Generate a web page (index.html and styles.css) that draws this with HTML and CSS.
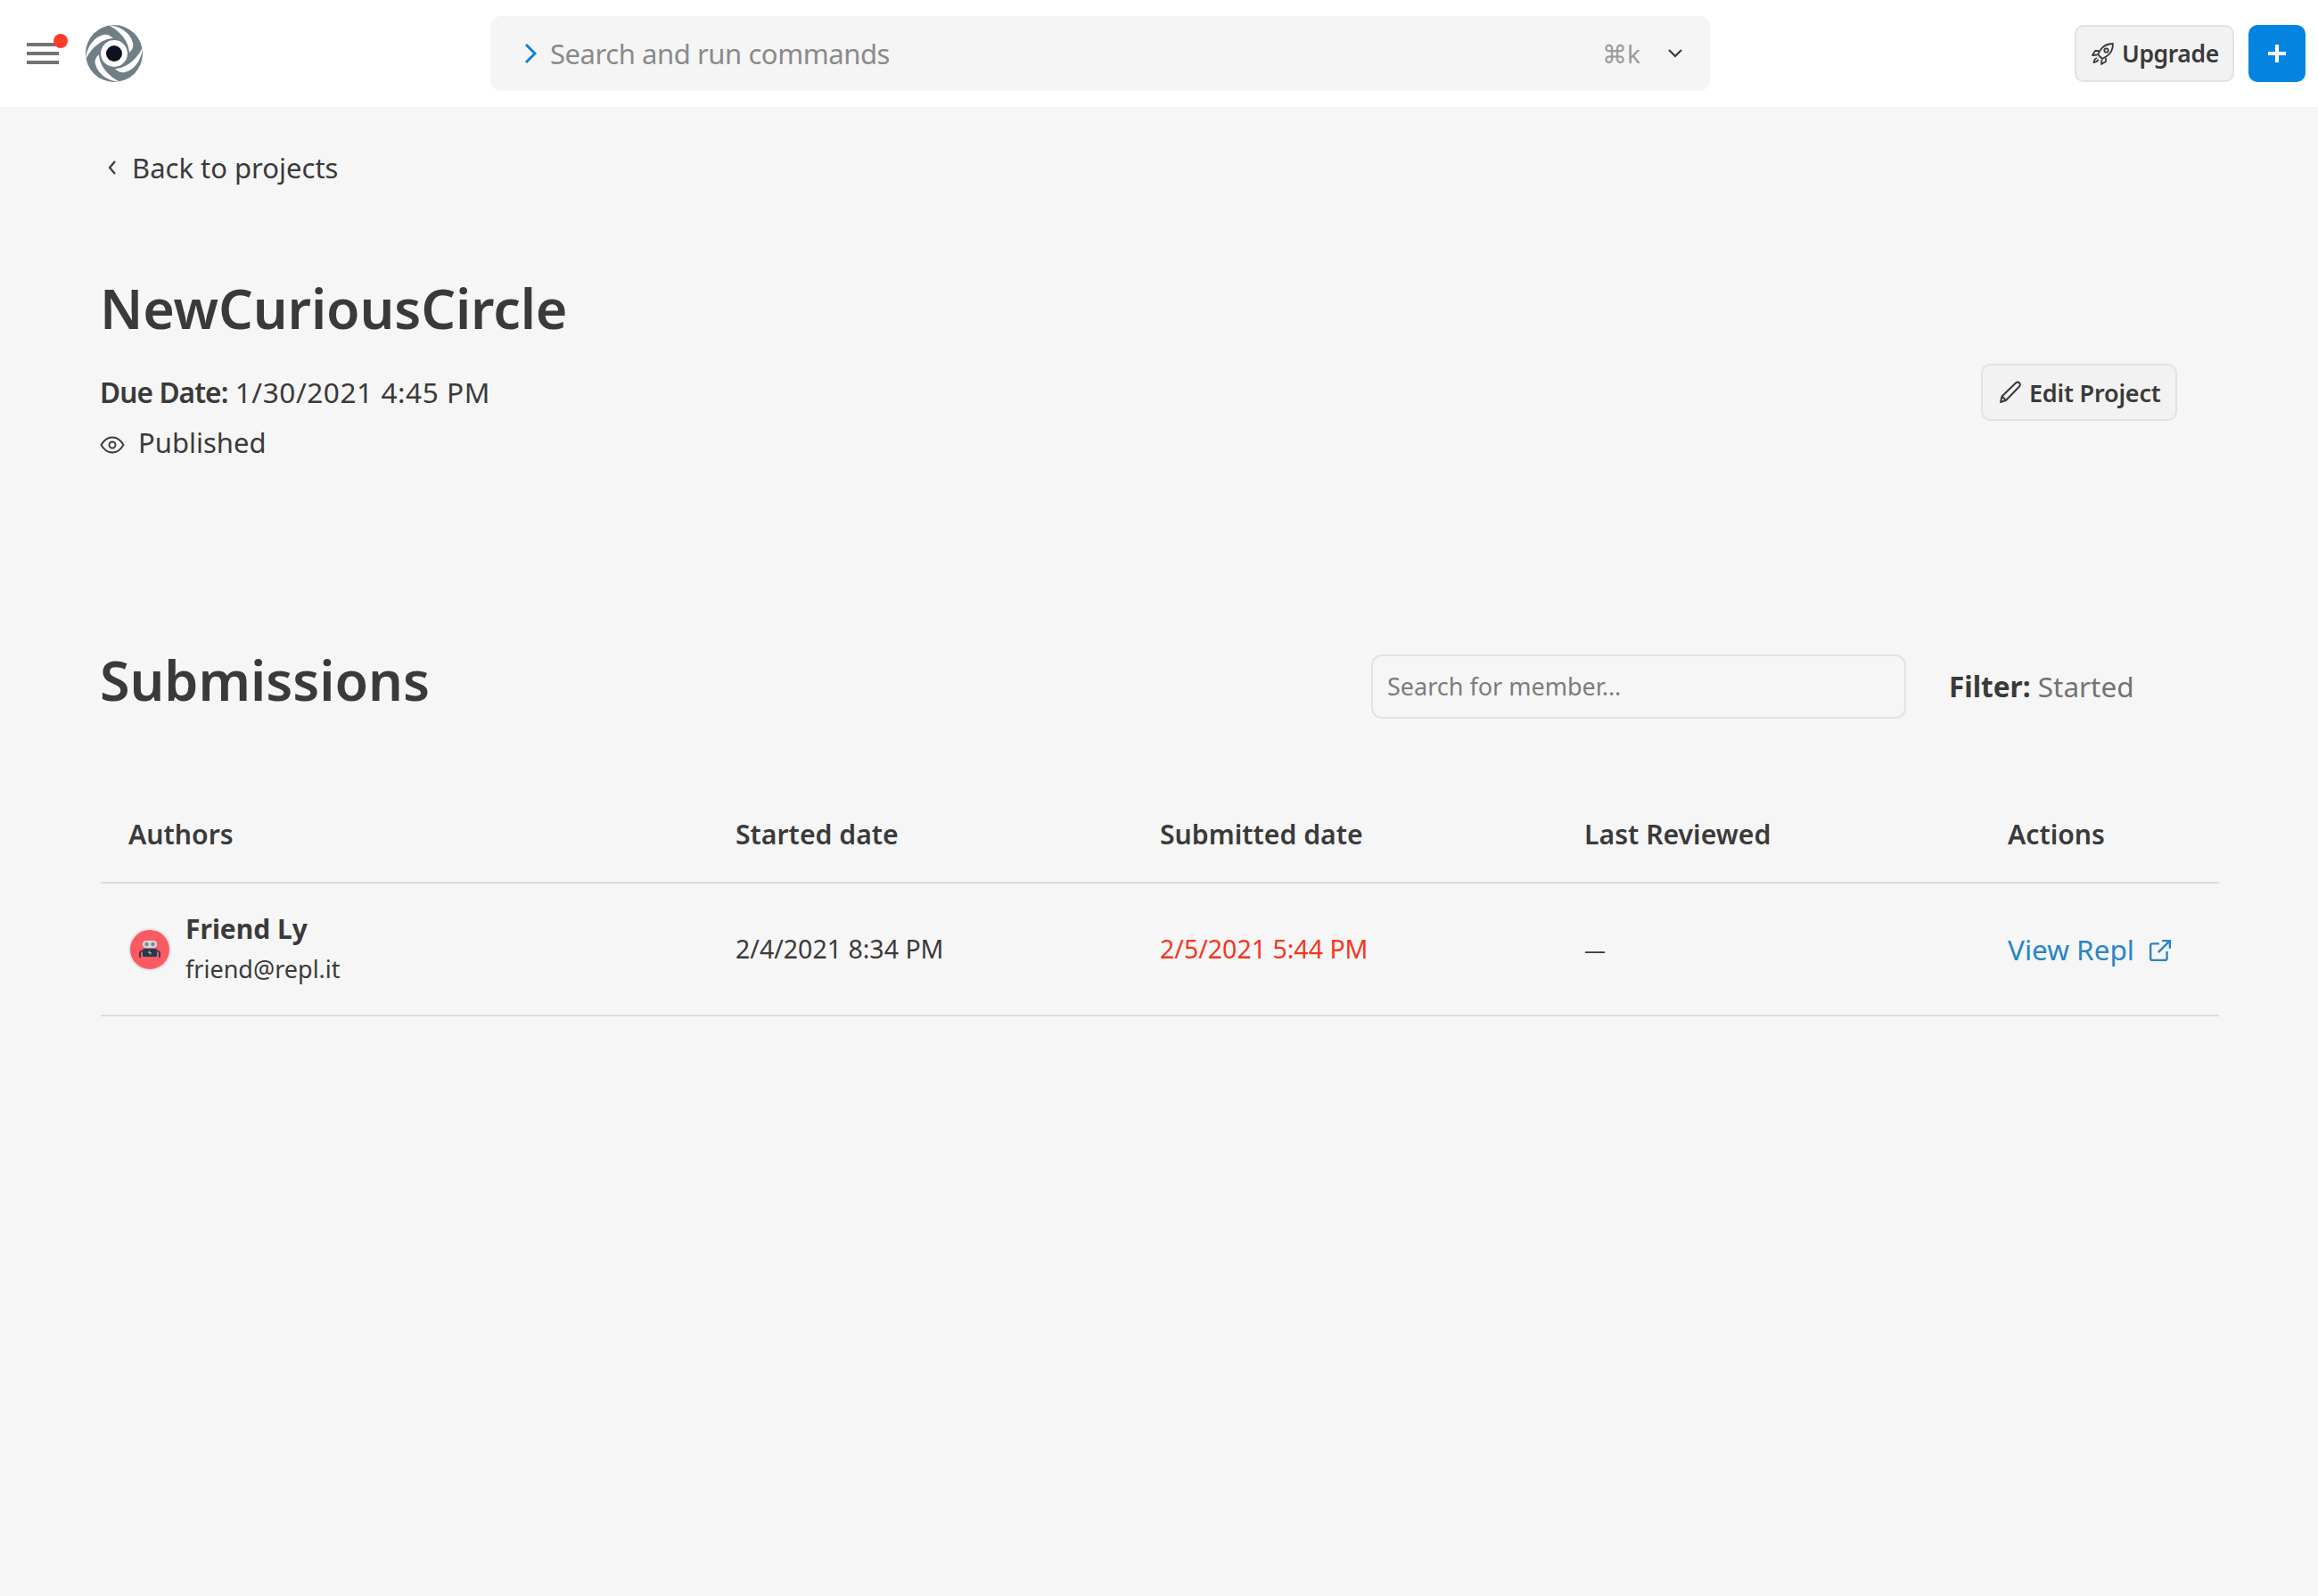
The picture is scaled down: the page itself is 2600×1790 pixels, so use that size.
FILE: index.html
```html
<!DOCTYPE html>
<html lang="en">
<head>
<meta charset="utf-8">
<title>NewCuriousCircle</title>
<link rel="stylesheet" href="styles.css">
</head>
<body>
<header class="topbar">
  <div class="brand">
    <button class="menu" aria-label="Menu">
      <svg class="menu-icon" viewBox="0 0 36 24"><path d="M0 2h36M0 12h36M0 22h36" stroke="#737373" stroke-width="4"/></svg>
      <span class="menu-dot"></span>
    </button>
    <svg class="logo" viewBox="0 0 64 64">
      <circle cx="32" cy="32" r="32" fill="#6f7f85"/>
      <circle cx="32" cy="32" r="15" fill="#fff"/>
      <g fill="#fff">
        <path d="M25 0C38 1 50 8 53 20C54 24 53 27 49 31C49 22 42 8 25 0z"/>
        <path d="M25 0C38 1 50 8 53 20C54 24 53 27 49 31C49 22 42 8 25 0z" transform="rotate(90 32 32)"/>
        <path d="M25 0C38 1 50 8 53 20C54 24 53 27 49 31C49 22 42 8 25 0z" transform="rotate(180 32 32)"/>
        <path d="M25 0C38 1 50 8 53 20C54 24 53 27 49 31C49 22 42 8 25 0z" transform="rotate(270 32 32)"/>
      </g>
      <circle cx="32" cy="32" r="9" fill="#0e1220"/>
    </svg>
  </div>
  <div class="command">
    <svg class="cmd-chevron" viewBox="0 0 14 24"><path d="M2 2l10 10L2 22" fill="none" stroke="#0b83d9" stroke-width="3"/></svg>
    <span class="cmd-text">Search and run commands</span>
    <span class="cmd-key">⌘k</span>
    <svg class="cmd-down" viewBox="0 0 18 12"><path d="M2 2l7 7 7-7" fill="none" stroke="#333" stroke-width="2"/></svg>
  </div>
  <div class="top-actions">
    <button class="btn btn-upgrade">
      <svg class="icon-rocket" viewBox="0 0 26 26" fill="none" stroke="#3a3a3a" stroke-width="1.8" stroke-linejoin="round"><path d="M24 2c-6 0-11 2.500-14 7l-3 5 5 5 5-3c4.500-3 7-8 7-14z"/><circle cx="16.500" cy="9.500" r="2.200"/><path d="M8 10H4l-3 5 5-.5M16 18v4l-5 3 .5-5M6 18c-2 .5-3 2-3.500 5 3-.5 4.500-1.500 5-3.500"/></svg>
      Upgrade
    </button>
    <button class="btn-plus" aria-label="New">
      <svg viewBox="0 0 24 24"><path d="M12 2v20M2 12h20" stroke="#fff" stroke-width="4"/></svg>
    </button>
  </div>
</header>

<main class="page">
  <a class="back" href="#">
    <svg class="back-icon" viewBox="0 0 12 20"><path d="M9 3L3 10l6 7" fill="none" stroke="#3a3a3a" stroke-width="2.200"/></svg>
    Back to projects
  </a>

  <h1 class="title">NewCuriousCircle</h1>
  <div class="project-meta">
    <div class="meta-text">
      <p class="due"><b>Due Date:</b> <span class="due-value">1/30/2021 4:45 PM</span></p>
      <p class="status">
        <svg class="icon-eye" viewBox="0 0 28 22" fill="none" stroke="#3a3a3a" stroke-width="1.900"><path d="M1.500 11C5 5 9 2.500 14 2.500S23 5 26.500 11C23 17 19 19.500 14 19.500S5 17 1.500 11z"/><circle cx="14" cy="11" r="3.500"/></svg>
        Published
      </p>
    </div>
    <button class="btn btn-edit">
      <svg class="icon-pencil" viewBox="0 0 26 26" fill="none" stroke="#3a3a3a" stroke-width="2" stroke-linejoin="round"><path d="M2 24l1.500-6.500L19 2.500c1.500-1.200 3-1 4 0s1.200 2.500 0 4L8 22z"/><path d="M3.500 17.500L8 22"/></svg>
      Edit Project
    </button>
  </div>

  <section class="submissions">
    <div class="sub-head">
      <h2 class="sub-title">Submissions</h2>
      <input class="member-search" type="text" placeholder="Search for member...">
      <div class="filter"><b>Filter:</b> <span>Started</span></div>
    </div>

    <div class="table">
      <div class="row row-head">
        <div>Authors</div>
        <div>Started date</div>
        <div>Submitted date</div>
        <div>Last Reviewed</div>
        <div>Actions</div>
      </div>
      <div class="row row-body">
        <div class="author">
          <svg class="avatar" viewBox="0 0 48 48">
            <circle cx="24" cy="24" r="23" fill="#fb5a64" stroke="#e4e4e4" stroke-width="2"/>
            <rect x="16" y="14" width="16" height="8" rx="4" fill="#d5dadb"/>
            <circle cx="20.500" cy="18" r="2.300" fill="#7c8b90"/><circle cx="27.500" cy="18" r="2.300" fill="#7c8b90"/>
            <rect x="16" y="23" width="16" height="9" rx="1.500" fill="#1f3b55"/>
            <path d="M24 25l-1.500 2.500h3L24 30" fill="none" stroke="#e9b731" stroke-width="1"/>
            <path d="M16 25l-3 2v6M32 25l3 2v6" fill="none" stroke="#3c3f46" stroke-width="2"/>
          </svg>
          <div class="author-text">
            <div class="author-name">Friend Ly</div>
            <div class="author-mail">friend@repl.it</div>
          </div>
        </div>
        <div>2/4/2021 8:34 PM</div>
        <div class="late">2/5/2021 5:44 PM</div>
        <div class="dash">—</div>
        <div>
          <a class="view" href="#">View Repl
            <svg class="icon-ext" viewBox="0 0 24 24" fill="none" stroke="#2b84c6" stroke-width="2.200"><path d="M11 5H4a2 2 0 0 0-2 2v13a2 2 0 0 0 2 2h13a2 2 0 0 0 2-2v-7"/><path d="M10 14L22 2M14 2h8v8"/></svg>
          </a>
        </div>
      </div>
    </div>
  </section>
</main>
</body>
</html>
```

FILE: styles.css
```css
* { box-sizing: border-box; }
html, body { margin: 0; padding: 0; }
body {
  min-height: 1790px;
  background: #f6f6f6;
  color: #3a3a3a;
  font-family: "Noto Sans", "Liberation Sans", sans-serif;
  font-size: 32px;
}
button { font-family: inherit; cursor: pointer; }
p { margin: 0; }

.topbar {
  height: 120px;
  background: #fff;
  position: relative;
  display: flex;
  align-items: center;
  padding: 0 14px 0 30px;
}
.brand { display: flex; align-items: center; width: 520px; gap: 30px; }
.menu {
  position: relative;
  width: 36px;
  height: 24px;
  padding: 0;
  border: 0;
  background: none;
}
.menu-icon { display: block; width: 36px; height: 24px; }
.menu-dot {
  position: absolute;
  right: -10px;
  top: -10px;
  width: 16px;
  height: 16px;
  border-radius: 50%;
  background: #ff3c28;
}
.logo { width: 64px; height: 64px; display: block; }

.command {
  width: 1368px;
  height: 84px;
  background: #f5f5f5;
  border-radius: 12px;
  display: flex;
  align-items: center;
  padding: 0 30px 0 38px;
}
.cmd-chevron { width: 14px; height: 24px; margin-right: 15px; }
.cmd-text { flex: 1; color: #8a8a8a; font-size: 31px; letter-spacing: -0.44px; }
.cmd-key { color: #999; font-size: 28px; margin-right: 30px; }
.cmd-down { width: 18px; height: 12px; }

.top-actions { margin-left: auto; display: flex; gap: 16px; align-items: center; }
.btn {
  display: inline-flex;
  align-items: center;
  background: #f2f2f2;
  border: 2px solid #e2e2e2;
  border-radius: 10px;
  color: #3a3a3a;
  font-weight: 600;
  font-size: 27px;
}
.btn-upgrade { height: 64px; width: 179px; padding: 0 0 0 17px; gap: 8px; font-size: 26.500px; letter-spacing: -0.4px; }
.icon-rocket { width: 26px; height: 26px; }
.btn-plus {
  width: 64px;
  height: 64px;
  border: 0;
  border-radius: 10px;
  background: #0484e0;
  display: flex;
  align-items: center;
  justify-content: center;
  padding: 0;
}
.btn-plus svg { width: 24px; height: 24px; }

.page { padding: 0 111px 0 113px; }
.back {
  display: flex;
  align-items: center;
  height: 44px;
  margin-top: 46px;
  color: #3a3a3a;
  text-decoration: none;
  font-size: 31px;
  gap: 16px;
  padding-left: 7px;
}
.back-icon { width: 12px; height: 20px; }

.title {
  margin: 96px 0 0 -1px;
  font-size: 61px;
  line-height: 80px;
  font-weight: 600;
  letter-spacing: -0.15px;
}
.project-meta {
  display: flex;
  justify-content: space-between;
  align-items: flex-start;
  margin-top: 22px;
  padding-right: 47px;
}
.meta-text { padding-top: 4px; margin-left: -1px; }
.due { line-height: 56px; font-size: 31.600px; }
.due b { font-weight: 600; letter-spacing: -0.9px; }
.due-value { letter-spacing: 0.55px; }
.status { display: flex; align-items: center; gap: 15px; line-height: 56px; font-size: 31px; }
.icon-eye { width: 28px; height: 22px; margin-top: 5px; }
.btn-edit { height: 64px; width: 220px; padding: 0 0 0 18px; gap: 8px; letter-spacing: -0.2px; }
.icon-pencil { width: 26px; height: 26px; }

.submissions { margin-top: 199px; }
.sub-head { display: flex; align-items: center; height: 80px; }
.sub-title { margin: 0 0 0 -1px; font-size: 61px; line-height: 80px; font-weight: 600; flex: 0 0 1426px; letter-spacing: -0.05px; }
.member-search {
  width: 600px;
  height: 72px;
  margin-top: 13px;
  padding: 0 16px;
  border: 2px solid #e2e2e2;
  border-radius: 12px;
  background: transparent;
  font: 27px "Noto Sans", "Liberation Sans", sans-serif;
  color: #3a3a3a;
}
.member-search::placeholder { color: #7c7c7c; opacity: 1; }
.filter { margin: 13px 0 0 48px; font-size: 31.500px; }
.filter b { font-weight: 700; }
.filter span { color: #737373; }

.table { margin-top: 102px; }
.row {
  display: grid;
  grid-template-columns: 681px 476px 476px 475px 1fr;
  align-items: center;
  padding-left: 31px;
  border-bottom: 2px solid #dcdcdc;
}
.row-head { height: 86px; font-size: 30.200px; font-weight: 600; padding-bottom: 24px; }
.row-body { height: 149px; font-size: 28.500px; padding-bottom: 1px; }
.author { display: flex; align-items: center; gap: 16px; }
.avatar { width: 48px; height: 48px; flex: none; margin-top: 1px; }
.author-name { font-size: 30px; font-weight: 700; line-height: 45px; }
.author-mail { font-size: 27px; line-height: 45px; }
.late { color: #f4361f; }
.dash { font-size: 24px; }
.view {
  display: inline-flex;
  align-items: center;
  gap: 16px;
  color: #2b84c6;
  font-size: 31.500px;
  text-decoration: none;
}
.icon-ext { width: 26px; height: 26px; margin-top: 4px; }
```
